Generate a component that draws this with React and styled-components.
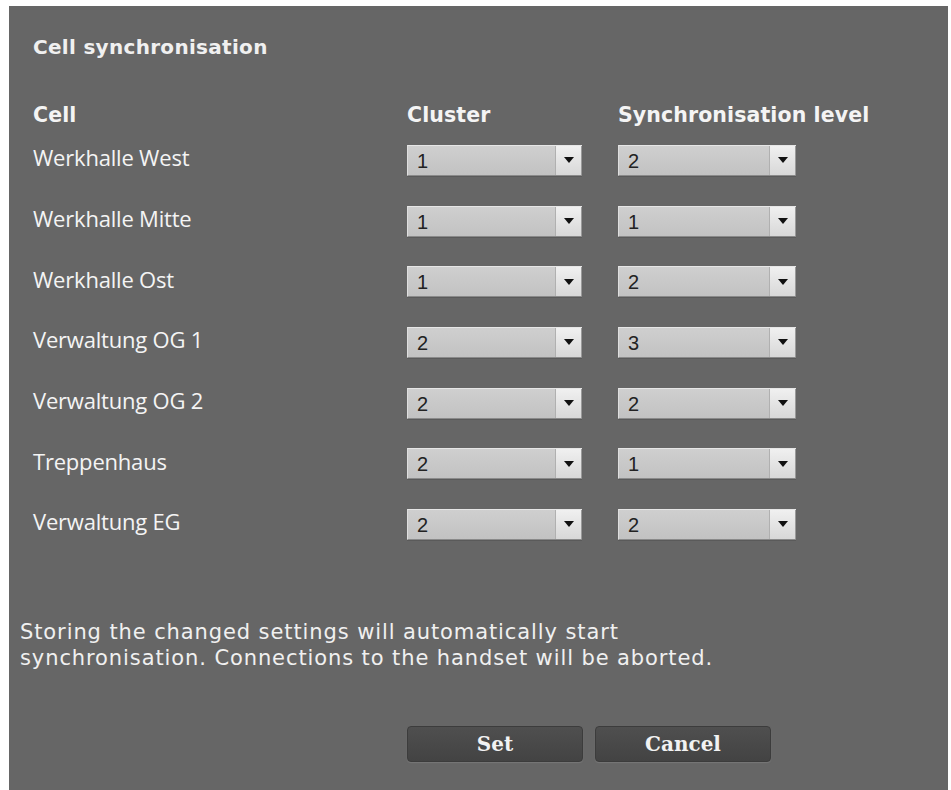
import React from 'react'
import styled, { createGlobalStyle } from 'styled-components'

const Global = createGlobalStyle`
  body {
    margin: 0;
    background: #ffffff;
  }
`

const Panel = styled.div`
  margin: 6px 0 0 9px;
  width: 939px;
  height: 784px;
  background: #666666;
  box-sizing: border-box;
  padding: 26px 0 0 24px;
  color: #f4f4f4;
`
const Title = styled.h1`
  margin: 0;
  height: 30px;
  line-height: 30px;
  font-family: "DejaVu Sans", Verdana, sans-serif;
  font-weight: bold;
  font-size: 20px;
  letter-spacing: 0.3px;
  color: #f0f0f0;
`
const Table = styled.div`
  margin-top: 38px;
  display: grid;
  grid-template-columns: 374px 211px 240px;
  grid-template-rows: 30px;
  grid-auto-rows: 60.7px;
  align-items: center;
`
const Head = styled.div`
  font-family: "DejaVu Sans", Verdana, sans-serif;
  font-weight: bold;
  font-size: 20.5px;
  letter-spacing: 0.1px;
  white-space: nowrap;
`
const Label = styled.div`
  font-family: "Open Sans", sans-serif;
  font-size: 22px;
  letter-spacing: -0.2px;
  margin-top: -6px;
`
const Select = styled.div`
  width: ${p => p.width}px;
  height: 31px;
  display: flex;
  box-sizing: border-box;
  background: linear-gradient(#cfcfcf, #c2c2c2);
  border-top: 1px solid #e6e6e6;
  border-left: 1px solid #dedede;
  border-bottom: 1px solid #8a8a8a;
  box-shadow: 0 1px 0 #5a5a5a;
`
const Value = styled.div`
  flex: 1;
  padding-left: 9px;
  font-family: "Liberation Sans", Arial, sans-serif;
  font-size: 20px;
  line-height: 30px;
  color: #222;
`
const Arrow = styled.div`
  width: 25px;
  display: flex;
  align-items: center;
  justify-content: center;
  background: linear-gradient(#f0f0f0, #d8d8d8);
  border-left: 1px solid #b0b0b0;
  border-right: 1px solid #9a9a9a;
  &::after {
    content: '';
    border-left: 5px solid transparent;
    border-right: 5px solid transparent;
    border-top: 6px solid #111;
  }
`
const Note = styled.p`
  margin: 64px 0 0 -13px;
  font-family: "DejaVu Sans", Verdana, sans-serif;
  font-size: 21px;
  line-height: 26px;
  letter-spacing: 0.9px;
  color: #f0f0f0;
`
const Buttons = styled.div`
  display: flex;
  gap: 12px;
  margin: 55px 0 0 374px;
`
const Button = styled.button`
  width: 176px;
  height: 36px;
  border: 1px solid #3c3c3c;
  border-radius: 4px;
  background: linear-gradient(#4f4f4f, #434343);
  color: #f2f2f2;
  font-family: "DejaVu Serif", Georgia, serif;
  font-weight: bold;
  font-size: 20px;
  box-shadow: 0 1px 1px #777;
`

const cells = [
  ['Werkhalle West', '1', '2'],
  ['Werkhalle Mitte', '1', '1'],
  ['Werkhalle Ost', '1', '2'],
  ['Verwaltung OG 1', '2', '3'],
  ['Verwaltung OG 2', '2', '2'],
  ['Treppenhaus', '2', '1'],
  ['Verwaltung EG', '2', '2'],
]

const Dropdown = ({ value, width }) => (
  <Select width={width}>
    <Value>{value}</Value>
    <Arrow />
  </Select>
)

export default function App() {
  return (
    <>
      <Global />
      <Panel>
        <Title>Cell synchronisation</Title>
        <Table>
          <Head>Cell</Head>
          <Head>Cluster</Head>
          <Head>Synchronisation level</Head>
          {cells.map(([name, cluster, level]) => (
            <React.Fragment key={name}>
              <Label>{name}</Label>
              <Dropdown value={cluster} width={175} />
              <Dropdown value={level} width={178} />
            </React.Fragment>
          ))}
        </Table>
        <Note>
          Storing the changed settings will automatically start<br />
          synchronisation. Connections to the handset will be aborted.
        </Note>
        <Buttons>
          <Button>Set</Button>
          <Button>Cancel</Button>
        </Buttons>
      </Panel>
    </>
  )
}
